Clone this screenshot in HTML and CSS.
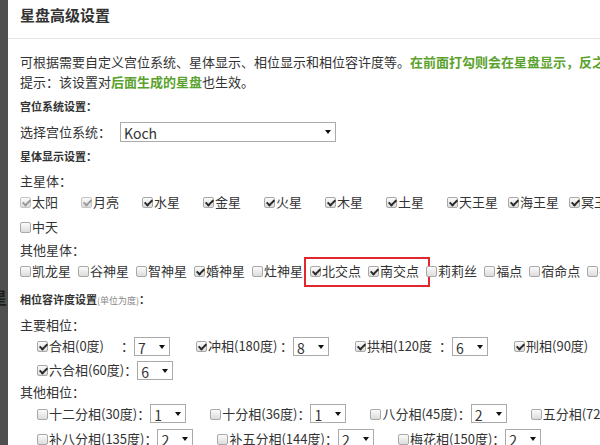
FILE: index.html
```html
<!DOCTYPE html>
<html lang="zh-CN">
<head>
    <meta charset="UTF-8">
    <title>星盘高级设置</title>
    <link rel="stylesheet" href="styles.css">
</head>
<body>

<div class="page">
    <div class="mask"><span class="behind">星</span></div>

    <div class="dialog">
        <div class="dialog-head">星盘高级设置</div>

        <div class="dialog-body">
            <p class="intro">可根据需要自定义宫位系统、星体显示、相位显示和相位容许度等。<b class="green">在前面打勾则会在星盘显示，反之则不显示。</b></p>
            <p class="intro">提示：该设置对<b class="green">后面生成的星盘</b>也生效。</p>

            <div class="sec">宫位系统设置：</div>
            <div class="line">选择宫位系统：<span class="sel wide"><select><option>Koch</option><option>Placidus</option><option>Equal</option></select></span></div>

            <div class="sec">星体显示设置：</div>
            <div class="sub">主星体：</div>
            <div class="cks main">
                <div class="ck-row">
                    <label class="item"><input type="checkbox" class="ck" checked disabled>太阳</label>
                    <label class="item"><input type="checkbox" class="ck" checked disabled>月亮</label>
                    <label class="item"><input type="checkbox" class="ck" checked>水星</label>
                    <label class="item"><input type="checkbox" class="ck" checked>金星</label>
                    <label class="item"><input type="checkbox" class="ck" checked>火星</label>
                    <label class="item"><input type="checkbox" class="ck" checked>木星</label>
                    <label class="item"><input type="checkbox" class="ck" checked>土星</label>
                    <label class="item"><input type="checkbox" class="ck" checked>天王星</label>
                    <label class="item"><input type="checkbox" class="ck" checked>海王星</label>
                    <label class="item"><input type="checkbox" class="ck" checked>冥王星</label>
                </div>
                <div class="ck-row">
                    <label class="item"><input type="checkbox" class="ck">中天</label>
                </div>
            </div>

            <div class="sub gap">其他星体：</div>
            <div class="cks other">
                <div class="ck-row">
                    <label class="item"><input type="checkbox" class="ck">凯龙星</label>
                    <label class="item"><input type="checkbox" class="ck">谷神星</label>
                    <label class="item"><input type="checkbox" class="ck">智神星</label>
                    <label class="item"><input type="checkbox" class="ck" checked>婚神星</label>
                    <label class="item"><input type="checkbox" class="ck">灶神星</label>
                    <span class="mark">
                        <label class="item"><input type="checkbox" class="ck" checked>北交点</label>
                        <label class="item"><input type="checkbox" class="ck" checked>南交点</label>
                    </span>
                    <label class="item"><input type="checkbox" class="ck">莉莉丝</label>
                    <label class="item"><input type="checkbox" class="ck">福点</label>
                    <label class="item"><input type="checkbox" class="ck">宿命点</label>
                    <label class="item"><input type="checkbox" class="ck">宿命点</label>
                </div>
            </div>

            <div class="sec aspect-title">相位容许度设置<span class="unit">(单位为度)</span>：</div>
            <div class="sub gap">主要相位：</div>
            <div class="asps major">
                <div class="asp-row">
                    <span class="asp"><label><input type="checkbox" class="ck" checked><span class="name">合相(0度)</span></label>：<span class="sel"><select><option>7</option></select></span></span>
                    <span class="asp"><label><input type="checkbox" class="ck" checked><span class="name">冲相(180度)</span></label>：<span class="sel"><select><option>8</option></select></span></span>
                    <span class="asp"><label><input type="checkbox" class="ck" checked><span class="name">拱相(120度</span></label>：<span class="sel"><select><option>6</option></select></span></span>
                    <span class="asp"><label><input type="checkbox" class="ck" checked><span class="name">刑相(90度)</span></label>：<span class="sel"><select><option>6</option></select></span></span>
                </div>
                <div class="asp-row">
                    <span class="asp"><label><input type="checkbox" class="ck" checked><span class="name">六合相(60度)</span></label>：<span class="sel"><select><option>6</option></select></span></span>
                </div>
            </div>

            <div class="sub gap">其他相位：</div>
            <div class="asps minor">
                <div class="asp-row">
                    <span class="asp"><label><input type="checkbox" class="ck">十二分相(30度)</label>：<span class="sel"><select><option>1</option></select></span></span>
                    <span class="asp"><label><input type="checkbox" class="ck">十分相(36度)</label>：<span class="sel"><select><option>1</option></select></span></span>
                    <span class="asp"><label><input type="checkbox" class="ck">八分相(45度)</label>：<span class="sel"><select><option>2</option></select></span></span>
                    <span class="asp"><label><input type="checkbox" class="ck">五分相(72度)</label>：<span class="sel"><select><option>2</option></select></span></span>
                </div>
                <div class="asp-row">
                    <span class="asp"><label><input type="checkbox" class="ck">补八分相(135度)</label>：<span class="sel"><select><option>2</option></select></span></span>
                    <span class="asp"><label><input type="checkbox" class="ck">补五分相(144度)</label>：<span class="sel"><select><option>2</option></select></span></span>
                    <span class="asp"><label><input type="checkbox" class="ck">梅花相(150度)</label>：<span class="sel"><select><option>2</option></select></span></span>
                </div>
            </div>
        </div>
    </div>
</div>

</body>
</html>
```

FILE: styles.css
```css
* {
    box-sizing: border-box;
}
html, body {
    margin: 0;
    height: 100%;
    overflow: hidden;
}
body {
    font-family: "Noto Sans CJK SC", "Noto Sans", sans-serif;
    font-size: 13px;
    color: #333;
    background: #fff;
}
.page {
    display: flex;
    height: 445px;
}
.mask {
    flex: none;
    width: 8px;
    background: #4f4f4f;
    overflow: hidden;
}
.behind {
    display: block;
    margin: 289px 0 0 -9px;
    font-size: 16px;
    font-weight: bold;
    line-height: 16px;
    color: #1c1c1c;
}
.dialog {
    flex: none;
    width: 760px;
    background: #fff;
}
.dialog-head {
    height: 39px;
    padding: 4px 12px 0;
    border-bottom: 1px solid #e6e6e6;
    font-size: 15px;
    font-weight: bold;
    line-height: 22px;
}
.dialog-body {
    padding: 13px 12px 0;
    white-space: nowrap;
}
.intro {
    margin: 0;
    line-height: 20px;
}
.green {
    color: #5aa22c;
}
.sec {
    height: 30px;
    padding-bottom: 1px;
    font-size: 11px;
    font-weight: bold;
    line-height: 29px;
}
.aspect-title {
    margin-top: 2px;
}
.unit {
    font-size: 9px;
    font-weight: normal;
    color: #888;
}
.line {
    display: flex;
    align-items: center;
    height: 20px;
    line-height: 20px;
}
.sub {
    height: 20px;
    padding-bottom: 2px;
    line-height: 18px;
}
.sub.gap {
    margin-top: 1px;
}

/* checkboxes */
.ck {
    appearance: none;
    -webkit-appearance: none;
    position: relative;
    flex: none;
    width: 11px;
    height: 11px;
    margin: 1px 1px 0 0;
    border: 1px solid #a8a8a8;
    border-radius: 2px;
    background: linear-gradient(#fbfbfb, #dcdcdc);
}
.ck:checked::after {
    content: "";
    position: absolute;
    left: 3px;
    top: 0;
    width: 3px;
    height: 6px;
    border: solid #2a2a2a;
    border-width: 0 2px 2px 0;
    transform: rotate(45deg);
}
.ck:disabled {
    border-color: #c4c4c4;
}
.ck:disabled::after {
    border-color: #9a9a9a;
}
.ck-row {
    display: flex;
    align-items: center;
    height: 25px;
    padding-bottom: 2px;
    line-height: 18px;
}
.cks.main {
    margin-top: -2px;
}
.cks .item {
    display: flex;
    align-items: center;
    flex: none;
}
.cks.main .item {
    width: 61px;
}
.cks.other .ck-row {
    height: 22px;
}
.cks.other .item {
    margin-right: 7px;
}
.mark {
    position: relative;
    display: flex;
    flex: none;
}
.mark::after {
    content: "";
    position: absolute;
    left: -6px;
    right: -4px;
    top: -5px;
    bottom: -7px;
    border: 2px solid #e0282e;
}

/* selects */
.sel {
    position: relative;
    display: block;
    flex: none;
}
.sel select {
    appearance: none;
    -webkit-appearance: none;
    display: block;
    width: 36px;
    height: 19px;
    margin: 0;
    padding: 0 0 0 3px;
    border: 1px solid #aaa;
    border-radius: 0;
    background: #fff;
    font-family: "Noto Sans CJK SC", "Noto Sans", sans-serif;
    font-size: 14px;
    color: #333;
}
.sel::after {
    content: "";
    position: absolute;
    right: 5px;
    top: 8px;
    border-left: 3px solid transparent;
    border-right: 3px solid transparent;
    border-top: 4px solid #111;
    pointer-events: none;
}
.sel.wide {
    margin-left: 9px;
}
.sel.wide select {
    width: 216px;
    height: 20px;
}

/* aspects */
.asps {
    margin-top: -2px;
}
.asp-row {
    display: flex;
    align-items: center;
    height: 24px;
    padding-left: 17px;
    line-height: 20px;
}
.asps.minor .asp-row {
    height: 25px;
}
.asp {
    display: flex;
    align-items: center;
    flex: none;
    margin-right: 24px;
}
.asp label {
    display: flex;
    align-items: center;
}
.asps.major .asp {
    margin-right: 26px;
}
.asps.major .name {
    display: inline-block;
    min-width: 72px;
}
```
